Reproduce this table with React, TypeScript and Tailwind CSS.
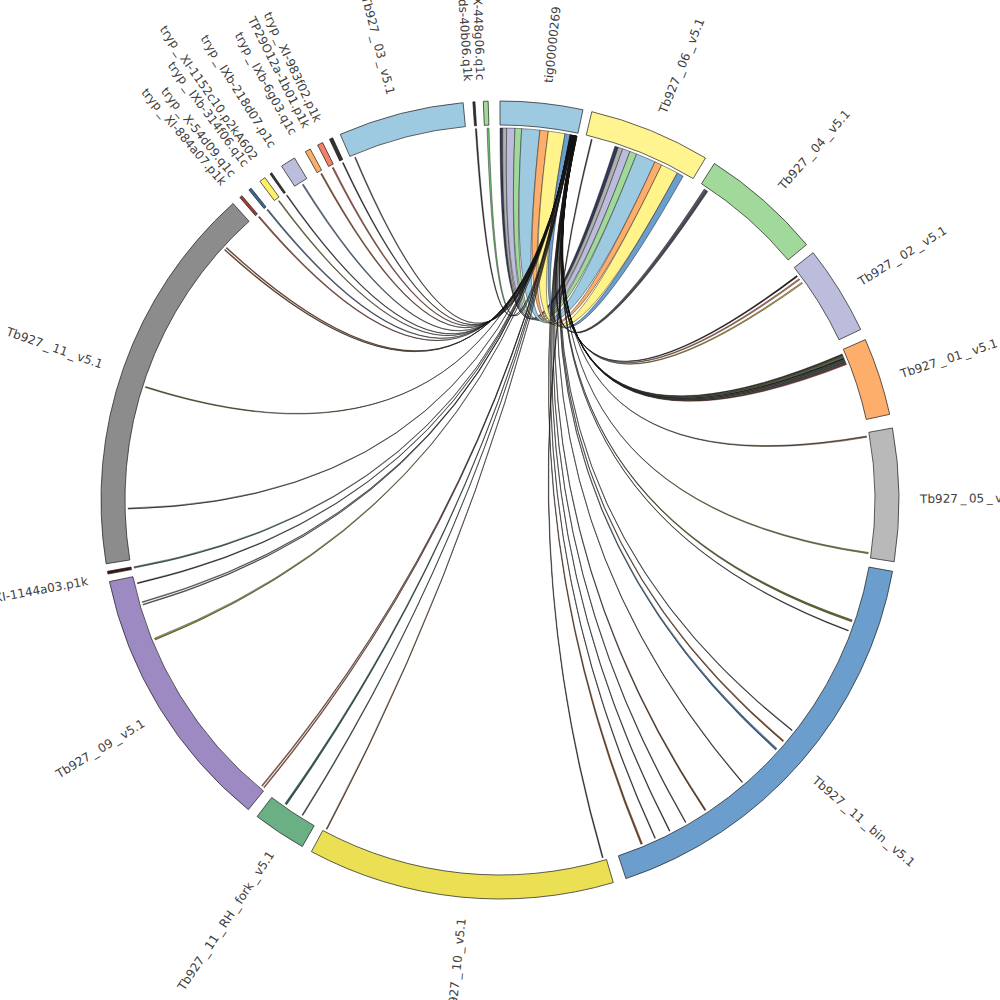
import React from "react";

const CX = 500;
const CY = 500;
const RO = 399;
const RI = 375;
const RR = 372;
const RL = 420;

const rad = (d: number) => (d * Math.PI) / 180;
const pt = (r: number, a: number): [number, number] => [
  CX + r * Math.sin(rad(a)),
  CY - r * Math.cos(rad(a)),
];
const f = (n: number) => n.toFixed(2);

function sector(a1: number, a2: number) {
  const large = a2 - a1 > 180 ? 1 : 0;
  const [x1, y1] = pt(RO, a1);
  const [x2, y2] = pt(RO, a2);
  const [x3, y3] = pt(RI, a2);
  const [x4, y4] = pt(RI, a1);
  return `M${f(x1)},${f(y1)} A${RO},${RO} 0 ${large} 1 ${f(x2)},${f(y2)} L${f(x3)},${f(y3)} A${RI},${RI} 0 ${large} 0 ${f(x4)},${f(y4)} Z`;
}

function ribbon(s0: number, s1: number, t0: number, t1: number) {
  const [a, b] = pt(RR, s0);
  const [c, d] = pt(RR, s1);
  const [e, g] = pt(RR, t0);
  const [h, i] = pt(RR, t1);
  return `M${f(a)},${f(b)} A${RR},${RR} 0 0 1 ${f(c)},${f(d)} Q${CX},${CY} ${f(e)},${f(g)} A${RR},${RR} 0 0 1 ${f(h)},${f(i)} Q${CX},${CY} ${f(a)},${f(b)} Z`;
}

type Seg = { a1: number; a2: number; fill: string; label: string };

const segs: Seg[] = [
  { a1: 0.0, a2: 12.0, fill: "#9ecae1", label: "tig00000269" },
  { a1: 13.3, a2: 31.0, fill: "#fff48f", label: "Tb927_06_v5.1" },
  { a1: 32.5, a2: 50.2, fill: "#a1d99b", label: "Tb927_04_v5.1" },
  { a1: 51.7, a2: 64.7, fill: "#bcbddc", label: "Tb927_02_v5.1" },
  { a1: 66.3, a2: 77.6, fill: "#fdae6b", label: "Tb927_01_v5.1" },
  { a1: 79.6, a2: 98.9, fill: "#b9b9b9", label: "Tb927_05_v5.1" },
  { a1: 100.3, a2: 161.6, fill: "#6b9ecd", label: "Tb927_11_bin_v5.1" },
  { a1: 163.5, a2: 208.2, fill: "#ebe053", label: "Tb927_10_v5.1" },
  { a1: 209.7, a2: 217.5, fill: "#6bb084", label: "Tb927_11_RH_fork_v5.1" },
  { a1: 219.1, a2: 258.2, fill: "#9d8ac2", label: "Tb927_09_v5.1" },
  { a1: 259.3, a2: 259.7, fill: "#3a1a10", label: "tryp_XI-1144a03.p1k" },
  { a1: 260.8, a2: 318.0, fill: "#8c8c8c", label: "Tb927_11_v5.1" },
  { a1: 319.3, a2: 319.7, fill: "#a83c2c", label: "tryp_XI-884a07.p1k" },
  { a1: 321.0, a2: 321.4, fill: "#3a6a9a", label: "tryp_X-54d09.q1c" },
  { a1: 323.0, a2: 323.9, fill: "#fff06a", label: "tryp_IXb-314f06.q1c" },
  { a1: 324.8, a2: 325.1, fill: "#333333", label: "tryp_XI-1152c10.p2kA602" },
  { a1: 326.8, a2: 329.0, fill: "#bcbddc", label: "tryp_IXb-218d07.p1c" },
  { a1: 330.8, a2: 331.6, fill: "#fdae6b", label: "tryp_IXb-6g03.q1c" },
  { a1: 332.8, a2: 333.6, fill: "#f4806a", label: "TP29O12a-1b01.p1k" },
  { a1: 334.7, a2: 335.2, fill: "#333333", label: "tryp_XI-983f02.p1k" },
  { a1: 336.4, a2: 354.7, fill: "#9ecae1", label: "Tb927_03_v5.1" },
  { a1: 356.1, a2: 356.4, fill: "#333333", label: "tryp_IXds-40b06.q1k" },
  { a1: 357.6, a2: 358.3, fill: "#a1d99b", label: "tryp_X-448g06.q1c" },
];

// colored syntenic ribbons tig00000269 <-> Tb927_06
const bigRibbons: [number, number, number, number, string][] = [
  [0.0, 0.42, 18.0, 18.55, "#323a5c"],
  [0.42, 1.03, 18.55, 19.26, "#b0b0b0"],
  [1.03, 2.31, 19.26, 20.45, "#bcbddc"],
  [2.31, 3.34, 20.45, 21.55, "#a1d99b"],
  [3.34, 6.17, 21.55, 24.62, "#9ecae1"],
  [6.17, 7.47, 24.62, 25.76, "#fdae6b"],
  [7.47, 10.07, 25.76, 28.46, "#fff38a"],
  [10.07, 10.85, 28.46, 29.5, "#6a9ecf"],
];

// thin ribbons from tig00000269 to target [angle, width, colour]
const thinTargets: [number, number, string][] = [
  [358.0, 0.3, "#74c476"],
  [356.2, 0.2, "#333333"],
  [337.0, 0.15, "#555555"],
  [334.95, 0.15, "#333333"],
  [333.2, 0.2, "#c0604a"],
  [331.2, 0.2, "#a0522d"],
  [327.9, 0.2, "#5a7a9a"],
  [324.95, 0.15, "#333333"],
  [323.45, 0.15, "#8a8a3a"],
  [321.2, 0.2, "#4a6a8a"],
  [319.5, 0.2, "#b05040"],
  [312.6, 0.15, "#a0522d"],
  [312.2, 0.15, "#8b4513"],
  [287.6, 0.15, "#6b6b2a"],
  [268.6, 0.15, "#555555"],
  [259.45, 0.2, "#4a7a5a"],
  [257.0, 0.15, "#333333"],
  [254.0, 0.12, "#777777"],
  [253.6, 0.12, "#777777"],
  [247.9, 0.3, "#8a8a3a"],
  [219.7, 0.15, "#c06040"],
  [219.3, 0.15, "#c06040"],
  [215.0, 0.3, "#2e5e5e"],
  [212.0, 0.15, "#3a5a3a"],
  [207.7, 0.15, "#8b4513"],
  [157.5, 0.25, "#8b4513"],
  [155.3, 0.12, "#333333"],
  [152.8, 0.12, "#333333"],
  [150.0, 0.12, "#333333"],
  [146.4, 0.2, "#6b3a1a"],
  [139.3, 0.12, "#333333"],
  [131.9, 0.3, "#3a6a9a"],
  [130.3, 0.2, "#8b4513"],
  [128.2, 0.12, "#333333"],
  [110.5, 0.12, "#333333"],
  [108.8, 0.3, "#6b6b2a"],
  [98.1, 0.2, "#8a8a3a"],
  [80.1, 0.2, "#7a5a3a"],
  [68.4, 0.25, "#7a3a2a"],
  [68.1, 0.25, "#444444"],
  [67.8, 0.25, "#2e4e4e"],
  [67.5, 0.25, "#222222"],
  [67.2, 0.25, "#6b6b2a"],
  [66.9, 0.25, "#333333"],
  [54.2, 0.2, "#c8b840"],
  [53.5, 0.2, "#e07860"],
  [52.9, 0.2, "#222222"],
  [33.65, 0.3, "#4a4a5a"],
  [33.3, 0.3, "#5a5a6a"],
];

function buildThin() {
  const sorted = [...thinTargets].sort(
    (p, q) => ((q[0] - 12 + 360) % 360) - ((p[0] - 12 + 360) % 360)
  );
  const start = 10.9;
  const end = 11.95;
  const slot = (end - start) / sorted.length;
  return sorted.map(([t, w, c], i) => {
    const s0 = start + i * slot;
    return { d: ribbon(s0, s0 + slot * 0.85, t, t + w), c };
  });
}

function Label({ a, text }: { a: number; text: string }) {
  const right = a < 180;
  const [x, y] = pt(RL, a);
  const rot = right ? a - 90 : a + 90;
  const parts = text.split("_");
  return (
    <text
      transform={`translate(${f(x)} ${f(y)}) rotate(${f(rot)})`}
      textAnchor={right ? "start" : "end"}
      dy="0.72em"
      fontSize={12}
      fill="#404040"
      fontFamily="'DejaVu Sans', 'Liberation Sans', sans-serif"
    >
      {parts.map((p, i) =>
        i === 0 ? (
          <tspan key={i}>{p}</tspan>
        ) : (
          <React.Fragment key={i}>
            <tspan dx="2.5">_</tspan>
            <tspan dx="2.5">{p}</tspan>
          </React.Fragment>
        )
      )}
    </text>
  );
}

export default function App() {
  const thin = buildThin();
  return (
    <div className="w-[1000px] h-[1000px] bg-white overflow-hidden">
      <svg width={1000} height={1000} viewBox="0 0 1000 1000">
        <g stroke="#111" strokeWidth={0.45} strokeLinejoin="round">
          {bigRibbons.map(([s0, s1, t0, t1, c], i) => (
            <path key={`b${i}`} d={ribbon(s0, s1, t0, t1)} fill={c} />
          ))}
          <path d={ribbon(14.2, 14.35, 163.9, 164.05)} fill="#333" />
          {thin.map((r, i) => (
            <path key={`t${i}`} d={r.d} fill={r.c} />
          ))}
        </g>
        <g stroke="#1a1a1a" strokeWidth={0.7}>
          {segs.map((s, i) => (
            <path key={`s${i}`} d={sector(s.a1, s.a2)} fill={s.fill} />
          ))}
        </g>
        <g>
          {segs.map((s, i) => (
            <Label key={`l${i}`} a={(s.a1 + s.a2) / 2} text={s.label} />
          ))}
        </g>
      </svg>
    </div>
  );
}
